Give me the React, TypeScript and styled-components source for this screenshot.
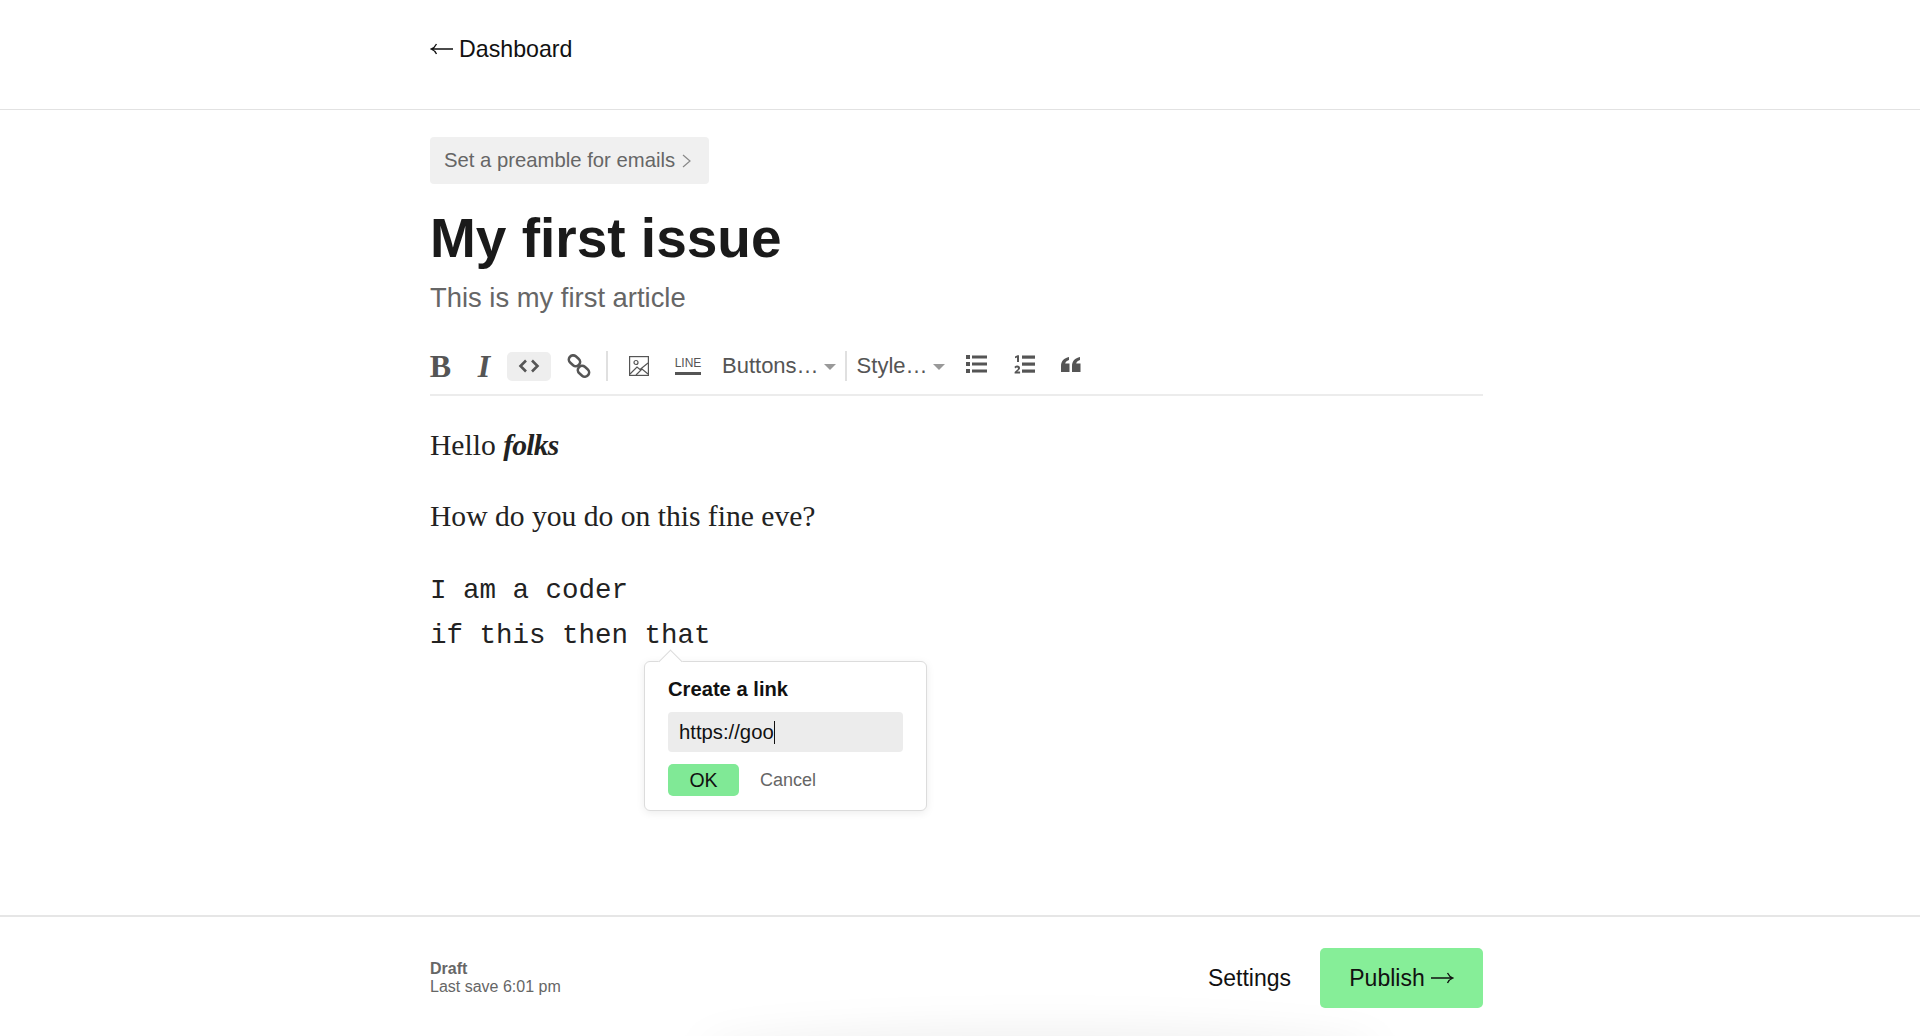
import React from 'react';
import styled, { createGlobalStyle } from 'styled-components';

const Global = createGlobalStyle`
  html, body { margin: 0; padding: 0; background: #fff; }
  body { font-family: "Liberation Sans", Arial, sans-serif; color: #111; }
`;

const Page = styled.div`
  position: relative;
  height: 1036px;
  display: flex;
  flex-direction: column;
  overflow: hidden;
`;
const Wrap = styled.div`
  width: 1053px;
  margin-left: 430px;
`;
const TopBar = styled.header`
  height: 109px;
  border-bottom: 1px solid #e2e2e2;
  flex: none;
`;
const BackLink = styled.a`
  display: flex;
  align-items: center;
  gap: 6px;
  padding-top: 35px;
  line-height: 28px;
  font-size: 23.2px;
  color: #111;
`;
const Main = styled.main`
  flex: 1;
`;
const Preamble = styled.button`
  display: flex;
  align-items: center;
  gap: 7px;
  height: 47px;
  margin-top: 27px;
  padding: 0 18px 0 14px;
  border: 0;
  border-radius: 4px;
  background: #f0f0f0;
  color: #666;
  font: 20.3px "Liberation Sans", Arial, sans-serif;
`;
const Title = styled.h1`
  margin: 21px 0 0;
  font-size: 55px;
  line-height: 66px;
  font-weight: 700;
  color: #1a1a1a;
`;
const Subtitle = styled.h2`
  margin: 10px 0 0;
  font-size: 27.4px;
  line-height: 34px;
  font-weight: 400;
  color: #666;
`;
const Toolbar = styled.div`
  display: flex;
  align-items: center;
  height: 56px;
  margin-top: 23px;
  border-bottom: 2px solid #ececec;
  color: #555;
`;
const Tool = styled.span<{ $w: number; $ml?: number; $active?: boolean; $lift?: boolean }>`
  flex: none;
  display: flex;
  align-items: center;
  justify-content: center;
  width: ${p => p.$w}px;
  height: 29px;
  margin-left: ${p => p.$ml ?? 0}px;
  margin-bottom: ${p => (p.$lift ? 4 : 0)}px;
  border-radius: 5px;
  background: ${p => (p.$active ? '#eeeeee' : 'transparent')};
`;
const BoldGlyph = styled.span`
  font: 700 32px "Liberation Serif", serif;
  color: #555;
`;
const ItalicGlyph = styled.span`
  font: italic 700 32px "Liberation Serif", serif;
  color: #555;
`;
const Sep = styled.span<{ $ml: number }>`
  flex: none;
  width: 2px;
  height: 30px;
  margin-left: ${p => p.$ml}px;
  background: #e0e0e0;
`;
const LineTool = styled.span<{ $ml: number }>`
  flex: none;
  display: flex;
  flex-direction: column;
  align-items: center;
  width: 26px;
  margin-left: ${p => p.$ml}px;
  font-size: 12px;
  font-weight: 400;
  line-height: 11px;
  color: #555;
  &::after {
    content: '';
    width: 26px;
    height: 3px;
    margin-top: 3px;
    background: #555;
  }
`;
const Menu = styled.span<{ $ml: number }>`
  flex: none;
  display: flex;
  align-items: center;
  gap: 5px;
  margin-left: ${p => p.$ml}px;
  font-size: 22px;
  color: #555;
  &::after {
    content: '';
    width: 0;
    height: 0;
    margin-top: 2px;
    border-left: 6px solid transparent;
    border-right: 6px solid transparent;
    border-top: 6px solid #999;
  }
`;
const Editor = styled.div`
  position: relative;
  padding-top: 27px;
`;
const Para = styled.p`
  margin: 0 0 27px;
  font: 29.6px/44px "Liberation Serif", serif;
  color: #222;
`;
const Emphasis = styled.em`
  font-weight: 700;
  letter-spacing: -0.8px;
`;
const Code = styled.pre`
  margin: 0;
  padding-top: 4px;
  font: 27.5px/44.5px "Liberation Mono", monospace;
  color: #222;
`;
const Popover = styled.div`
  position: absolute;
  left: 214px;
  top: 265px;
  box-sizing: border-box;
  width: 283px;
  height: 150px;
  padding: 15px 23px;
  border: 1px solid #dcdcdc;
  border-radius: 6px;
  background: #fff;
  box-shadow: 0 2px 8px rgba(0, 0, 0, 0.08);
  &::before {
    content: '';
    position: absolute;
    left: 17px;
    top: -9px;
    width: 16px;
    height: 16px;
    background: #fff;
    border-left: 1px solid #dcdcdc;
    border-top: 1px solid #dcdcdc;
    transform: rotate(45deg);
  }
`;
const PopTitle = styled.div`
  position: relative;
  font-size: 20.2px;
  line-height: 24px;
  font-weight: 700;
  color: #111;
`;
const LinkInput = styled.div`
  display: flex;
  align-items: center;
  height: 40px;
  margin-top: 11px;
  padding-left: 11px;
  border-radius: 4px;
  background: #ececec;
  font-size: 20.3px;
  color: #111;
`;
const Caret = styled.span`
  width: 1px;
  height: 23px;
  background: #111;
`;
const PopActions = styled.div`
  display: flex;
  align-items: center;
  gap: 21px;
  margin-top: 12px;
`;
const OkButton = styled.button`
  width: 71px;
  height: 32px;
  padding: 0;
  border: 0;
  border-radius: 5px;
  background: #80e996;
  color: #111;
  font: 19.5px "Liberation Sans", Arial, sans-serif;
`;
const CancelLabel = styled.span`
  font-size: 18px;
  color: #666;
`;
const Footer = styled.footer`
  flex: none;
  height: 119px;
  border-top: 2px solid #e6e6e6;
`;
const FooterRow = styled(Wrap)`
  display: flex;
  align-items: center;
  justify-content: space-between;
  height: 120px;
  margin-top: 1px;
`;
const Status = styled.div`
  font-size: 16px;
  line-height: 18px;
  color: #666;
`;
const StatusTitle = styled.div`
  font-weight: 700;
`;
const Actions = styled.div`
  display: flex;
  align-items: center;
  gap: 29px;
`;
const SettingsLabel = styled.span`
  font-size: 23px;
  color: #111;
`;
const PublishButton = styled.button`
  display: flex;
  align-items: center;
  justify-content: center;
  gap: 6px;
  width: 163px;
  height: 60px;
  padding: 0;
  border: 0;
  border-radius: 5px;
  background: #86ee98;
  color: #111;
  font: 23px "Liberation Sans", Arial, sans-serif;
`;
const BottomGlow = styled.div`
  position: absolute;
  left: 700px;
  bottom: -40px;
  width: 680px;
  height: 50px;
  border-radius: 50%;
  background: rgba(0, 0, 0, 0.055);
  filter: blur(18px);
`;

export default function App() {
  return (
    <Page>
      <Global />
      <TopBar>
        <Wrap>
          <BackLink>
            <svg width="23" height="12" viewBox="0 0 23 12" fill="none" stroke="#111" strokeWidth="1.3">
              <path d="M1 6h22M6.500 1C5.500 3.200 3.800 5 1 6c2.800 1 4.500 2.800 5.500 5" />
            </svg>
            Dashboard
          </BackLink>
        </Wrap>
      </TopBar>
      <Main>
        <Wrap>
          <Preamble>
            Set a preamble for emails
            <svg width="9" height="14" viewBox="0 0 9 14" fill="none" stroke="#888" strokeWidth="1.2">
              <path d="M1 1l7 6-7 6" />
            </svg>
          </Preamble>
          <Title>My first issue</Title>
          <Subtitle>This is my first article</Subtitle>
          <Toolbar>
            <Tool $w={21}><BoldGlyph>B</BoldGlyph></Tool>
            <Tool $w={16} $ml={25}><ItalicGlyph>I</ItalicGlyph></Tool>
            <Tool $w={44} $ml={15} $active>
              <svg width="22" height="14" viewBox="0 0 22 14" fill="none" stroke="#555" strokeWidth="2.6">
                <path d="M8 1.500L2.500 7 8 12.500M14 1.500L19.500 7 14 12.500" />
              </svg>
            </Tool>
            <Tool $w={24} $ml={16}>
              <svg width="24" height="24" viewBox="0 0 24 24" fill="none" stroke="#555" strokeWidth="2.6">
                <rect x="1.500" y="2.500" width="12" height="8.500" rx="4.200" transform="rotate(40 7.500 6.700)" />
                <rect x="10.500" y="13" width="12" height="8.500" rx="4.200" transform="rotate(40 16.500 17.200)" />
              </svg>
            </Tool>
            <Sep $ml={15} />
            <Tool $w={20} $ml={21}>
              <svg width="20" height="20" viewBox="0 0 20 20" fill="none" stroke="#555" strokeWidth="1.2">
                <rect x="0.600" y="0.600" width="18.800" height="18.800" />
                <circle cx="7" cy="6.500" r="2" />
                <path d="M1 18l7-7 3 2.500 8-6.500M7 19l6-6 6 5" />
              </svg>
            </Tool>
            <LineTool $ml={26}>LINE</LineTool>
            <Menu $ml={21}>Buttons…</Menu>
            <Sep $ml={9} />
            <Menu $ml={10}>Style…</Menu>
            <Tool $w={21} $ml={21} $lift>
              <svg width="21" height="18" viewBox="0 0 21 18" fill="#555">
                <rect x="0" y="0" width="4" height="4" />
                <rect x="0" y="7" width="4" height="4" />
                <rect x="0" y="14" width="4" height="4" />
                <rect x="6" y="0.500" width="15" height="3" />
                <rect x="6" y="7.500" width="15" height="3" />
                <rect x="6" y="14.500" width="15" height="3" />
              </svg>
            </Tool>
            <Tool $w={21} $ml={27} $lift>
              <svg width="21" height="19" viewBox="0 0 21 19" fill="#555">
                <path d="M1 1.500l2.500-1.300H5V7H3V2.500L1 3.300zM.6 18.500v-1.400l2.500-2.300c.7-.7.9-1 .9-1.400 0-.5-.4-.8-1-.8-.7 0-1.300.3-1.900.8L.5 11.700c.8-.7 1.700-1.100 2.800-1.100 1.600 0 2.700.9 2.700 2.300 0 .9-.4 1.500-1.500 2.500l-1.300 1.200H6.100v1.900z" />
                <rect x="8" y="0.500" width="13" height="3.200" />
                <rect x="8" y="7.500" width="13" height="3.200" />
                <rect x="8" y="14.500" width="13" height="3.200" />
              </svg>
            </Tool>
            <Tool $w={20} $ml={26} $lift>
              <svg width="20" height="15" viewBox="0 0 20 15" fill="#555">
                <path d="M0 9C0 4 3 1 8 0v3C5.500 4 4.500 5 4.200 6.500H8.500V15H0zM11 9c0-5 3-8 8-9v3c-2.500 1-3.500 2-3.800 3.500H19.500V15H11z" />
              </svg>
            </Tool>
          </Toolbar>
          <Editor>
            <Para>Hello <Emphasis>folks</Emphasis></Para>
            <Para>How do you do on this fine eve?</Para>
            <Code>{'I am a coder\nif this then that'}</Code>
            <Popover>
              <PopTitle>Create a link</PopTitle>
              <LinkInput>https://goo<Caret /></LinkInput>
              <PopActions>
                <OkButton>OK</OkButton>
                <CancelLabel>Cancel</CancelLabel>
              </PopActions>
            </Popover>
          </Editor>
        </Wrap>
      </Main>
      <Footer>
        <FooterRow>
          <Status>
            <StatusTitle>Draft</StatusTitle>
            Last save 6:01 pm
          </Status>
          <Actions>
            <SettingsLabel>Settings</SettingsLabel>
            <PublishButton>
              Publish
              <svg width="23" height="12" viewBox="0 0 23 12" fill="none" stroke="#111" strokeWidth="1.3">
                <path d="M0 6h22M16.500 1c1 2.200 2.700 4 5.500 5-2.800 1-4.500 2.800-5.500 5" />
              </svg>
            </PublishButton>
          </Actions>
        </FooterRow>
      </Footer>
      <BottomGlow />
    </Page>
  );
}
